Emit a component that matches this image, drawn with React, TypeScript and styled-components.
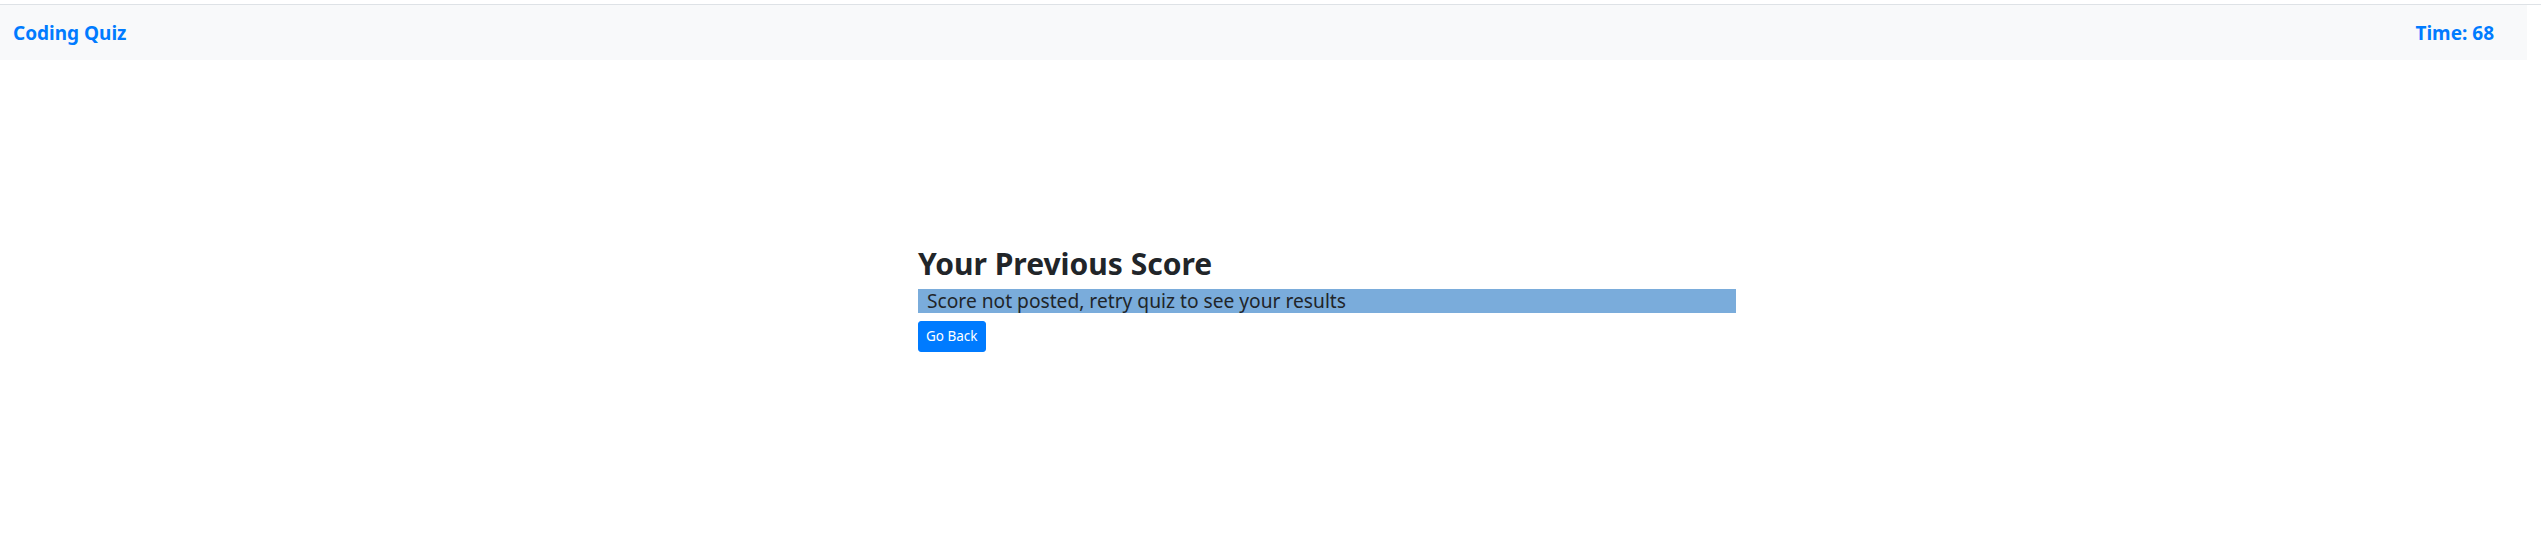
import styled, { createGlobalStyle } from "styled-components";

const GlobalStyle = createGlobalStyle`
	body {
		margin: 0;
		background: #ffffff;
		font-family: "Noto Sans", "Open Sans", Arial, sans-serif;
		color: #212529;
	}
`;

export default function App() {
	return (
		<>
			<GlobalStyle />
			<Page>
				<TopRule />
				<Header>
					<Brand>Coding Quiz</Brand>
					<Timer>Time: 68</Timer>
				</Header>
				<Main>
					<ScoreCard>
						<Title>Your Previous Score</Title>
						<ScoreLine>Score not posted, retry quiz to see your results</ScoreLine>
						<BackButton type="button">Go Back</BackButton>
					</ScoreCard>
				</Main>
			</Page>
		</>
	);
}

const Page = styled.div`
	padding-top: 4px;
`;

const TopRule = styled.div`
	border-top: 1px solid #dee2e6;
`;

const Header = styled.nav`
	display: flex;
	align-items: center;
	justify-content: space-between;
	height: 55px;
	margin-right: 14px;
	padding: 0 33px 0 13px;
	background: #f8f9fa;
`;

const Brand = styled.span`
	font-size: 19px;
	font-weight: 700;
	color: #007bff;
`;

const Timer = styled(Brand)``;

const Main = styled.main`
	padding: 186px 0 0 918px;
`;

const ScoreCard = styled.section`
	display: flex;
	flex-direction: column;
	align-items: flex-start;
	width: 818px;
`;

const Title = styled.h2`
	margin: 0 0 7px;
	font-size: 30px;
	font-weight: 700;
	line-height: 1.2;
`;

const ScoreLine = styled.p`
	align-self: stretch;
	margin: 0 0 8px;
	padding: 0 9px;
	height: 24px;
	line-height: 24px;
	font-size: 19.2px;
	background: #7aacdb;
	color: #212529;
`;

const BackButton = styled.button`
	height: 31px;
	padding: 0 7px;
	border: 1px solid #007bff;
	border-radius: 3px;
	background: #007bff;
	color: #ffffff;
	font-family: inherit;
	font-size: 13.5px;
	line-height: 1.5;
`;
